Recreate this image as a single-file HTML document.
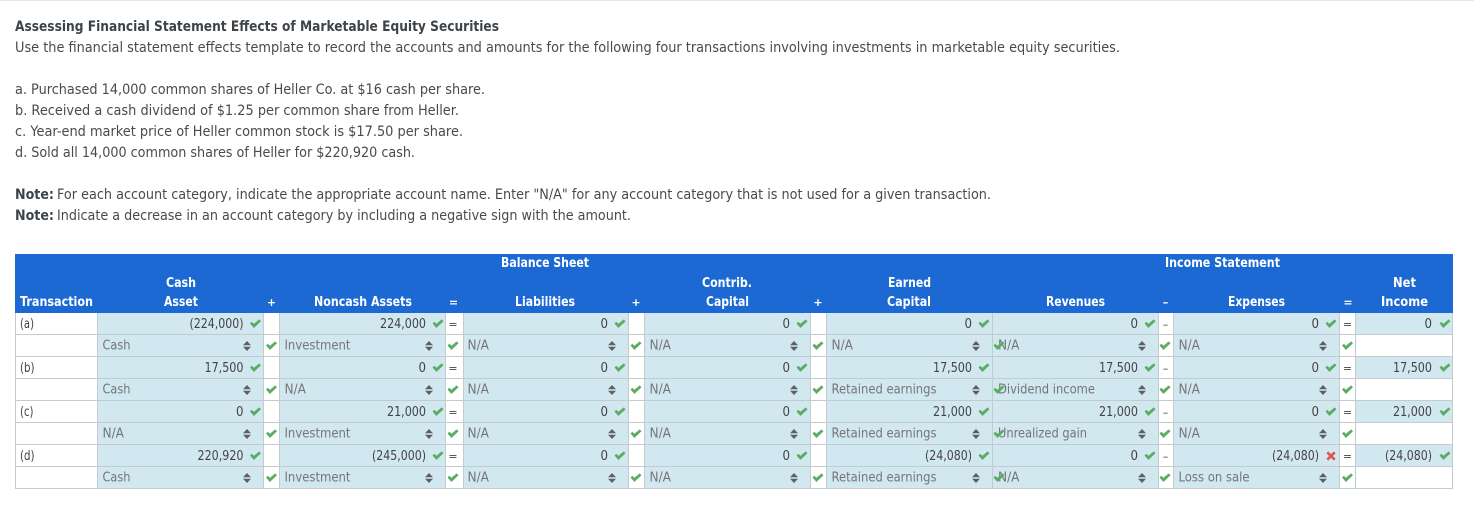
<!DOCTYPE html>
<html><head><meta charset="utf-8"><title>Assessing Financial Statement Effects</title>
<style>
html,body{margin:0;padding:0;background:#fff}
svg{display:block}
text{font-family:"DejaVu Sans","Liberation Sans",sans-serif;font-size:14.4px;fill:#4a4a4a}
.b{font-weight:700;fill:#3d4449}
.h{font-weight:700;font-size:13px;fill:#fff}
.o{font-weight:700;font-size:11px;fill:#fff;text-anchor:middle}
.v{font-size:13.2px;fill:#444;text-anchor:end}
.t{font-size:13.2px;fill:#444}
.s{font-size:13.2px;fill:#757575}
.e{font-size:11px;fill:#444;text-anchor:middle}
</style></head><body>
<svg xmlns="http://www.w3.org/2000/svg" width="1474" height="522" viewBox="0 0 1474 522">
<defs>
<path id="c" fill="#5cad64" d="M-5.500-.5l1.800-1.800L-1.600-.2 3.700-4.600 5.500-2.800-1.600 4z"/>
<path id="x" fill="#d9534f" d="M-4.600-2.800l1.800-1.800L0-1.800l2.800-2.800 1.800 1.800L1.800 0l2.800 2.800-1.800 1.800L0 1.800-2.800 4.600-4.600 2.800-1.800 0z"/>
<path id="a" fill="#606060" d="M-4-.8L0-5 4-.8zM-4 .8L0 5 4 .8z"/>
</defs>
<rect x="0" y="0" width="1474" height="1" fill="#e6e6e6"/>
<g transform="translate(0,-1)">
<text class="b" x="15" y="32" textLength="484" lengthAdjust="spacingAndGlyphs">Assessing Financial Statement Effects of Marketable Equity Securities</text>
<text x="15" y="53" textLength="1105" lengthAdjust="spacingAndGlyphs">Use the financial statement effects template to record the accounts and amounts for the following four transactions involving investments in marketable equity securities.</text>
<text x="15" y="95" textLength="470" lengthAdjust="spacingAndGlyphs">a. Purchased 14,000 common shares of Heller Co. at $16 cash per share.</text>
<text x="15" y="116" textLength="444" lengthAdjust="spacingAndGlyphs">b. Received a cash dividend of $1.25 per common share from Heller.</text>
<text x="15" y="137" textLength="448" lengthAdjust="spacingAndGlyphs">c. Year-end market price of Heller common stock is $17.50 per share.</text>
<text x="15" y="158" textLength="400" lengthAdjust="spacingAndGlyphs">d. Sold all 14,000 common shares of Heller for $220,920 cash.</text>
<text class="b" x="15" y="200" textLength="39" lengthAdjust="spacingAndGlyphs">Note:</text>
<text x="57" y="200" textLength="934" lengthAdjust="spacingAndGlyphs">For each account category, indicate the appropriate account name. Enter "N/A" for any account category that is not used for a given transaction.</text>
<text class="b" x="15" y="221" textLength="39" lengthAdjust="spacingAndGlyphs">Note:</text>
<text x="57" y="221" textLength="574" lengthAdjust="spacingAndGlyphs">Indicate a decrease in an account category by including a negative sign with the amount.</text>
</g>

<rect x="15" y="254" width="1438" height="59" fill="#1c69d4"/>
<g>
<rect x="97" y="313" width="166.500" height="176" fill="#d2e8f0"/>
<rect x="279" y="313" width="166.500" height="176" fill="#d2e8f0"/>
<rect x="463" y="313" width="165" height="176" fill="#d2e8f0"/>
<rect x="644" y="313" width="166.500" height="176" fill="#d2e8f0"/>
<rect x="826" y="313" width="332.700" height="176" fill="#d2e8f0"/>
<rect x="1173" y="313" width="166.700" height="176" fill="#d2e8f0"/>
<rect x="1355.300" y="313" width="97.700" height="22" fill="#d2e8f0"/>
<rect x="1355.300" y="357" width="97.700" height="22" fill="#d2e8f0"/>
<rect x="1355.300" y="401" width="97.700" height="22" fill="#d2e8f0"/>
<rect x="1355.300" y="445" width="97.700" height="22" fill="#d2e8f0"/>
</g>
<path fill="none" stroke="#c3cbcf" stroke-width="1" d="M15 334.500H1453M15 356.500H1453M15 378.500H1453M15 400.500H1453M15 422.500H1453M15 444.500H1453M15 466.500H1453M15 488.500H1453M15.500 313V489M97.500 313V489M263.500 313V489M279.500 313V489M445.500 313V489M463.500 313V489M628.500 313V489M644.500 313V489M810.500 313V489M826.500 313V489M992.500 313V489M1158.500 313V489M1173.500 313V489M1339.500 313V489M1355.500 313V489M1452.500 313V489"/>

<g transform="translate(0,-1)">
<text class="h" x="501" y="268" textLength="88" lengthAdjust="spacingAndGlyphs">Balance Sheet</text>
<text class="h" x="1165" y="268" textLength="115" lengthAdjust="spacingAndGlyphs">Income Statement</text>
<text class="h" x="166" y="288" textLength="30" lengthAdjust="spacingAndGlyphs">Cash</text>
<text class="h" x="164" y="307" textLength="34" lengthAdjust="spacingAndGlyphs">Asset</text>
<text class="h" x="20" y="307" textLength="73" lengthAdjust="spacingAndGlyphs">Transaction</text>
<text class="o" x="271.500" y="307">+</text>
<text class="h" x="314" y="307" textLength="98" lengthAdjust="spacingAndGlyphs">Noncash Assets</text>
<text class="o" x="453.500" y="307">=</text>
<text class="h" x="515" y="307" textLength="60" lengthAdjust="spacingAndGlyphs">Liabilities</text>
<text class="o" x="636" y="307">+</text>
<text class="h" x="702" y="288" textLength="50" lengthAdjust="spacingAndGlyphs">Contrib.</text>
<text class="h" x="706" y="307" textLength="43" lengthAdjust="spacingAndGlyphs">Capital</text>
<text class="o" x="818" y="307">+</text>
<text class="h" x="888" y="288" textLength="43" lengthAdjust="spacingAndGlyphs">Earned</text>
<text class="h" x="887" y="307" textLength="44" lengthAdjust="spacingAndGlyphs">Capital</text>
<text class="h" x="1046" y="307" textLength="59" lengthAdjust="spacingAndGlyphs">Revenues</text>
<text class="o" x="1165.500" y="307">–</text>
<text class="h" x="1228" y="307" textLength="57" lengthAdjust="spacingAndGlyphs">Expenses</text>
<text class="o" x="1348" y="307">=</text>
<text class="h" x="1393" y="288" textLength="23" lengthAdjust="spacingAndGlyphs">Net</text>
<text class="h" x="1381" y="307" textLength="47" lengthAdjust="spacingAndGlyphs">Income</text>
</g>

<text class="t" x="20" y="328" textLength="14" lengthAdjust="spacingAndGlyphs">(a)</text>
<text class="t" x="20" y="372" textLength="14.500" lengthAdjust="spacingAndGlyphs">(b)</text>
<text class="t" x="20" y="416" textLength="13.500" lengthAdjust="spacingAndGlyphs">(c)</text>
<text class="t" x="20" y="460" textLength="14.500" lengthAdjust="spacingAndGlyphs">(d)</text>

<!-- row a -->
<text class="v" x="243.500" y="328" textLength="54" lengthAdjust="spacingAndGlyphs">(224,000)</text>
<text class="v" x="426" y="328" textLength="46" lengthAdjust="spacingAndGlyphs">224,000</text>
<text class="v" x="608" y="328" textLength="7.500" lengthAdjust="spacingAndGlyphs">0</text>
<text class="v" x="790" y="328" textLength="7.500" lengthAdjust="spacingAndGlyphs">0</text>
<text class="v" x="972" y="328" textLength="7.500" lengthAdjust="spacingAndGlyphs">0</text>
<text class="v" x="1138" y="328" textLength="7.500" lengthAdjust="spacingAndGlyphs">0</text>
<text class="v" x="1319" y="328" textLength="7.500" lengthAdjust="spacingAndGlyphs">0</text>
<text class="v" x="1432" y="328" textLength="7.500" lengthAdjust="spacingAndGlyphs">0</text>
<!-- row b -->
<text class="v" x="243.500" y="372" textLength="39" lengthAdjust="spacingAndGlyphs">17,500</text>
<text class="v" x="426" y="372" textLength="7.500" lengthAdjust="spacingAndGlyphs">0</text>
<text class="v" x="608" y="372" textLength="7.500" lengthAdjust="spacingAndGlyphs">0</text>
<text class="v" x="790" y="372" textLength="7.500" lengthAdjust="spacingAndGlyphs">0</text>
<text class="v" x="972" y="372" textLength="39" lengthAdjust="spacingAndGlyphs">17,500</text>
<text class="v" x="1138" y="372" textLength="39" lengthAdjust="spacingAndGlyphs">17,500</text>
<text class="v" x="1319" y="372" textLength="7.500" lengthAdjust="spacingAndGlyphs">0</text>
<text class="v" x="1432" y="372" textLength="39" lengthAdjust="spacingAndGlyphs">17,500</text>
<!-- row c -->
<text class="v" x="243.500" y="416" textLength="7.500" lengthAdjust="spacingAndGlyphs">0</text>
<text class="v" x="426" y="416" textLength="39" lengthAdjust="spacingAndGlyphs">21,000</text>
<text class="v" x="608" y="416" textLength="7.500" lengthAdjust="spacingAndGlyphs">0</text>
<text class="v" x="790" y="416" textLength="7.500" lengthAdjust="spacingAndGlyphs">0</text>
<text class="v" x="972" y="416" textLength="39" lengthAdjust="spacingAndGlyphs">21,000</text>
<text class="v" x="1138" y="416" textLength="39" lengthAdjust="spacingAndGlyphs">21,000</text>
<text class="v" x="1319" y="416" textLength="7.500" lengthAdjust="spacingAndGlyphs">0</text>
<text class="v" x="1432" y="416" textLength="39" lengthAdjust="spacingAndGlyphs">21,000</text>
<!-- row d -->
<text class="v" x="243.500" y="460" textLength="46" lengthAdjust="spacingAndGlyphs">220,920</text>
<text class="v" x="426" y="460" textLength="54" lengthAdjust="spacingAndGlyphs">(245,000)</text>
<text class="v" x="608" y="460" textLength="7.500" lengthAdjust="spacingAndGlyphs">0</text>
<text class="v" x="790" y="460" textLength="7.500" lengthAdjust="spacingAndGlyphs">0</text>
<text class="v" x="972" y="460" textLength="47" lengthAdjust="spacingAndGlyphs">(24,080)</text>
<text class="v" x="1138" y="460" textLength="7.500" lengthAdjust="spacingAndGlyphs">0</text>
<text class="v" x="1319" y="460" textLength="47" lengthAdjust="spacingAndGlyphs">(24,080)</text>
<text class="v" x="1432" y="460" textLength="47" lengthAdjust="spacingAndGlyphs">(24,080)</text>

<!-- operators -->
<text class="e" x="453" y="328">=</text><text class="e" x="453" y="372">=</text><text class="e" x="453" y="416">=</text><text class="e" x="453" y="460">=</text>
<text class="e" x="1165.500" y="328">–</text><text class="e" x="1165.500" y="372">–</text><text class="e" x="1165.500" y="416">–</text><text class="e" x="1165.500" y="460">–</text>
<text class="e" x="1347.500" y="328">=</text><text class="e" x="1347.500" y="372">=</text><text class="e" x="1347.500" y="416">=</text><text class="e" x="1347.500" y="460">=</text>

<!-- select text -->
<g transform="translate(0,-0.5)">
<text class="s" x="102.500" y="350" textLength="28" lengthAdjust="spacingAndGlyphs">Cash</text>
<text class="s" x="284.500" y="350" textLength="66" lengthAdjust="spacingAndGlyphs">Investment</text>
<text class="s" x="467.500" y="350" textLength="21.500" lengthAdjust="spacingAndGlyphs">N/A</text>
<text class="s" x="649.500" y="350" textLength="21.500" lengthAdjust="spacingAndGlyphs">N/A</text>
<text class="s" x="831.500" y="350" textLength="21.500" lengthAdjust="spacingAndGlyphs">N/A</text>
<text class="s" x="998" y="350" textLength="21.500" lengthAdjust="spacingAndGlyphs">N/A</text>
<text class="s" x="1178.500" y="350" textLength="21.500" lengthAdjust="spacingAndGlyphs">N/A</text>

<text class="s" x="102.500" y="394" textLength="28" lengthAdjust="spacingAndGlyphs">Cash</text>
<text class="s" x="284.500" y="394" textLength="21.500" lengthAdjust="spacingAndGlyphs">N/A</text>
<text class="s" x="467.500" y="394" textLength="21.500" lengthAdjust="spacingAndGlyphs">N/A</text>
<text class="s" x="649.500" y="394" textLength="21.500" lengthAdjust="spacingAndGlyphs">N/A</text>
<text class="s" x="831.500" y="394" textLength="105" lengthAdjust="spacingAndGlyphs">Retained earnings</text>
<text class="s" x="998" y="394" textLength="97" lengthAdjust="spacingAndGlyphs">Dividend income</text>
<text class="s" x="1178.500" y="394" textLength="21.500" lengthAdjust="spacingAndGlyphs">N/A</text>

<text class="s" x="102.500" y="438" textLength="21.500" lengthAdjust="spacingAndGlyphs">N/A</text>
<text class="s" x="284.500" y="438" textLength="66" lengthAdjust="spacingAndGlyphs">Investment</text>
<text class="s" x="467.500" y="438" textLength="21.500" lengthAdjust="spacingAndGlyphs">N/A</text>
<text class="s" x="649.500" y="438" textLength="21.500" lengthAdjust="spacingAndGlyphs">N/A</text>
<text class="s" x="831.500" y="438" textLength="105" lengthAdjust="spacingAndGlyphs">Retained earnings</text>
<text class="s" x="998" y="438" textLength="89" lengthAdjust="spacingAndGlyphs">Unrealized gain</text>
<text class="s" x="1178.500" y="438" textLength="21.500" lengthAdjust="spacingAndGlyphs">N/A</text>

<text class="s" x="102.500" y="482" textLength="28" lengthAdjust="spacingAndGlyphs">Cash</text>
<text class="s" x="284.500" y="482" textLength="66" lengthAdjust="spacingAndGlyphs">Investment</text>
<text class="s" x="467.500" y="482" textLength="21.500" lengthAdjust="spacingAndGlyphs">N/A</text>
<text class="s" x="649.500" y="482" textLength="21.500" lengthAdjust="spacingAndGlyphs">N/A</text>
<text class="s" x="831.500" y="482" textLength="105" lengthAdjust="spacingAndGlyphs">Retained earnings</text>
<text class="s" x="998" y="482" textLength="21.500" lengthAdjust="spacingAndGlyphs">N/A</text>
<text class="s" x="1178.500" y="482" textLength="71" lengthAdjust="spacingAndGlyphs">Loss on sale</text>
</g>

<!-- value checks -->
<g>
<use href="#c" x="255.500" y="324"/><use href="#c" x="438" y="324"/><use href="#c" x="620" y="324"/><use href="#c" x="802" y="324"/><use href="#c" x="984" y="324"/><use href="#c" x="1150" y="324"/><use href="#c" x="1331" y="324"/><use href="#c" x="1445" y="324"/>
<use href="#c" x="255.500" y="368"/><use href="#c" x="438" y="368"/><use href="#c" x="620" y="368"/><use href="#c" x="802" y="368"/><use href="#c" x="984" y="368"/><use href="#c" x="1150" y="368"/><use href="#c" x="1331" y="368"/><use href="#c" x="1445" y="368"/>
<use href="#c" x="255.500" y="412"/><use href="#c" x="438" y="412"/><use href="#c" x="620" y="412"/><use href="#c" x="802" y="412"/><use href="#c" x="984" y="412"/><use href="#c" x="1150" y="412"/><use href="#c" x="1331" y="412"/><use href="#c" x="1445" y="412"/>
<use href="#c" x="255.500" y="456"/><use href="#c" x="438" y="456"/><use href="#c" x="620" y="456"/><use href="#c" x="802" y="456"/><use href="#c" x="984" y="456"/><use href="#c" x="1150" y="456"/><use href="#x" x="1331" y="456"/><use href="#c" x="1445" y="456"/>
</g>
<!-- select checks and arrows -->
<g>
<use href="#c" x="271.500" y="346"/><use href="#c" x="453" y="346"/><use href="#c" x="636" y="346"/><use href="#c" x="818" y="346"/><use href="#c" x="999" y="346"/><use href="#c" x="1165" y="346"/><use href="#c" x="1347.500" y="346"/>
<use href="#c" x="271.500" y="390"/><use href="#c" x="453" y="390"/><use href="#c" x="636" y="390"/><use href="#c" x="818" y="390"/><use href="#c" x="999" y="390"/><use href="#c" x="1165" y="390"/><use href="#c" x="1347.500" y="390"/>
<use href="#c" x="271.500" y="434"/><use href="#c" x="453" y="434"/><use href="#c" x="636" y="434"/><use href="#c" x="818" y="434"/><use href="#c" x="999" y="434"/><use href="#c" x="1165" y="434"/><use href="#c" x="1347.500" y="434"/>
<use href="#c" x="271.500" y="478"/><use href="#c" x="453" y="478"/><use href="#c" x="636" y="478"/><use href="#c" x="818" y="478"/><use href="#c" x="999" y="478"/><use href="#c" x="1165" y="478"/><use href="#c" x="1347.500" y="478"/>
<use href="#a" x="247" y="346"/><use href="#a" x="429" y="346"/><use href="#a" x="612" y="346"/><use href="#a" x="794" y="346"/><use href="#a" x="976" y="346"/><use href="#a" x="1142" y="346"/><use href="#a" x="1323" y="346"/>
<use href="#a" x="247" y="390"/><use href="#a" x="429" y="390"/><use href="#a" x="612" y="390"/><use href="#a" x="794" y="390"/><use href="#a" x="976" y="390"/><use href="#a" x="1142" y="390"/><use href="#a" x="1323" y="390"/>
<use href="#a" x="247" y="434"/><use href="#a" x="429" y="434"/><use href="#a" x="612" y="434"/><use href="#a" x="794" y="434"/><use href="#a" x="976" y="434"/><use href="#a" x="1142" y="434"/><use href="#a" x="1323" y="434"/>
<use href="#a" x="247" y="478"/><use href="#a" x="429" y="478"/><use href="#a" x="612" y="478"/><use href="#a" x="794" y="478"/><use href="#a" x="976" y="478"/><use href="#a" x="1142" y="478"/><use href="#a" x="1323" y="478"/>
</g>
</svg>
</body></html>
